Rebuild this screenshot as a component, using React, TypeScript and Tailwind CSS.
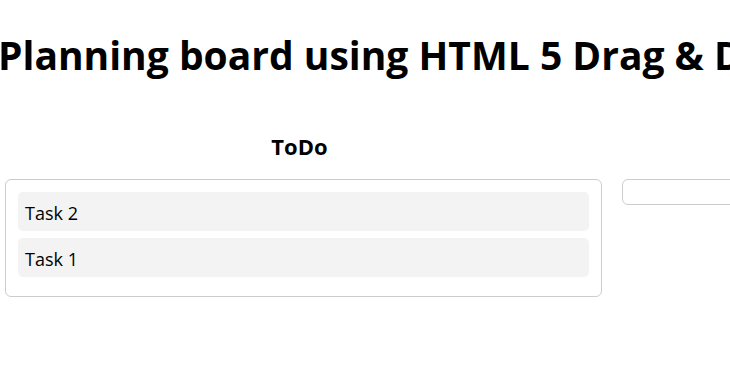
const columns = [
  { title: "ToDo", tasks: ["Task 2", "Task 1"] },
  { title: "In Progress", tasks: [] as string[] },
];

export default function App() {
  return (
    <div
      className="w-[730px] h-[377px] overflow-hidden bg-white text-black"
      style={{ fontFamily: '"Open Sans", "Noto Sans", sans-serif' }}
    >
      <h1 className="mt-[32px] -ml-[2px] text-[39px] leading-[46px] font-bold whitespace-nowrap">
        Planning board using HTML 5 Drag &amp; Drop
      </h1>
      <div className="flex gap-[20px] pl-[5px] mt-[54px]">
        {columns.map((col) => (
          <div key={col.title} className="w-[597px] shrink-0">
            <h3 className="text-center text-[22px] leading-[28px] font-bold mb-[19px] -translate-x-[4px]">
              {col.title === "ToDo" ? col.title : "\u00a0"}
            </h3>
            <div className="border border-[#cccccc] rounded-[6px] p-[12px]">
              {col.tasks.map((t) => (
                <div
                  key={t}
                  className="bg-[#f3f3f3] rounded-[5px] px-[7px] pt-[9px] pb-[5px] mb-[7px] text-[18px] leading-[25px]"
                >
                  {t}
                </div>
              ))}
            </div>
          </div>
        ))}
      </div>
    </div>
  );
}
